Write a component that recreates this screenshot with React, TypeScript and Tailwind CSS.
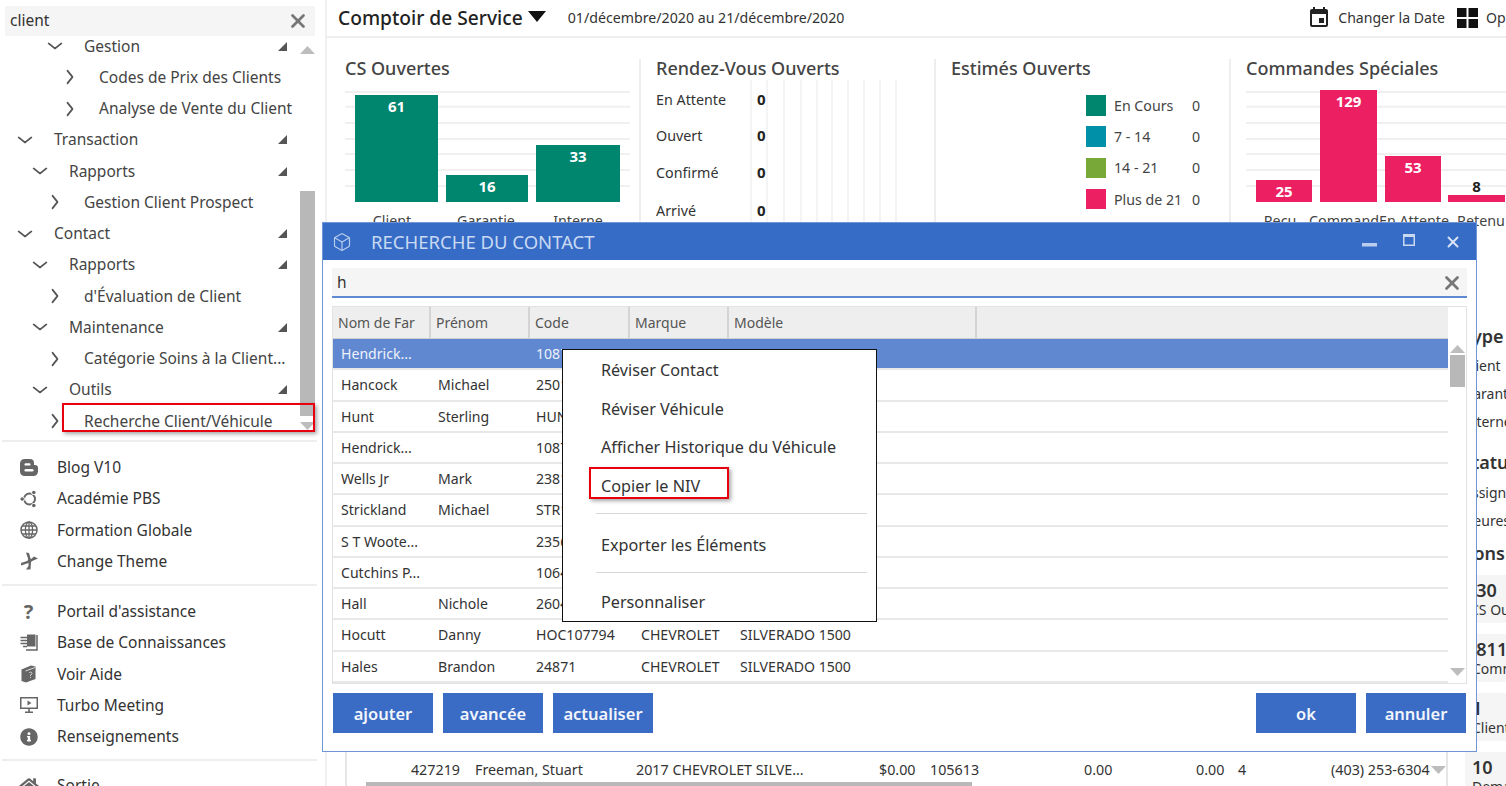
import React from "react";
import { ChevronDown, ChevronRight, Box, X } from "lucide-react";
import { FaInfoCircle, FaHome } from "react-icons/fa";
import { MdEvent } from "react-icons/md";

const tree: [number, string, boolean][] = [
  [2, "Gestion", true],
  [3, "Codes de Prix des Clients", false],
  [3, "Analyse de Vente du Client", false],
  [0, "Transaction", true],
  [1, "Rapports", true],
  [2, "Gestion Client Prospect", false],
  [0, "Contact", true],
  [1, "Rapports", true],
  [2, "d'Évaluation de Client", false],
  [1, "Maintenance", true],
  [2, "Catégorie Soins à la Client...", false],
  [1, "Outils", true],
  [2, "Recherche Client/Véhicule", false],
];

const rows: [string, string, string, string, string][] = [
  ["Hendrick...", "", "10879", "CHEVROLET", "CAMARO"],
  ["Hancock", "Michael", "25014", "CHEVROLET", "SILVERADO 1500"],
  ["Hunt", "Sterling", "HUN10433", "CHEVROLET", "SILVERADO 1500"],
  ["Hendrick...", "", "10879", "CHEVROLET", "SILVERADO 1500"],
  ["Wells Jr", "Mark", "23817", "CHEVROLET", "SILVERADO 1500"],
  ["Strickland", "Michael", "STR10622", "CHEVROLET", "SILVERADO 1500"],
  ["S T Woote...", "", "23565", "CHEVROLET", "SILVERADO 1500"],
  ["Cutchins P...", "", "10644", "CHEVROLET", "SILVERADO 1500"],
  ["Hall", "Nichole", "26044", "CHEVROLET", "SILVERADO 1500"],
  ["Hocutt", "Danny", "HOC107794", "CHEVROLET", "SILVERADO 1500"],
  ["Hales", "Brandon", "24871", "CHEVROLET", "SILVERADO 1500"],
];

const gridYs = [7, 21.7, 38, 54, 69, 85, 101];

function Corner() {
  return (
    <svg width="9" height="9" viewBox="0 0 9 9" className="shrink-0">
      <polygon points="0,9 9,9 9,0" fill="#555" />
    </svg>
  );
}

function UpArrow() {
  return (
    <svg width="15" height="8" viewBox="0 0 15 8" className="block">
      <polygon points="7.5,0 15,8 0,8" fill="#bdbdbd" />
    </svg>
  );
}
function DownArrow() {
  return (
    <svg width="15" height="8" viewBox="0 0 15 8" className="block">
      <polygon points="0,0 15,0 7.5,8" fill="#bdbdbd" />
    </svg>
  );
}

function SideItem({ icon, label }: { icon: React.ReactNode; label: string }) {
  return (
    <div className="flex h-[31.25px] shrink-0 items-center">
      <div className="flex w-[55px] shrink-0 justify-center pr-[2px] text-[#666]">{icon}</div>
      <span className="whitespace-nowrap text-[15.5px] text-[#333]">{label}</span>
    </div>
  );
}

const BlogIcon = (
  <svg width="18" height="17" viewBox="0 0 18 17">
    <path d="M4.5 0 H10 A4 4 0 0 1 14 4 V6 H15 A3 3 0 0 1 18 9 V12.5 A4.5 4.5 0 0 1 13.5 17 H4.5 A4.5 4.5 0 0 1 0 12.5 V4.5 A4.5 4.5 0 0 1 4.5 0Z" fill="#666" />
    <rect x="4.5" y="4.2" width="6" height="2.4" rx="1.2" fill="#fff" />
    <rect x="4.5" y="10" width="9" height="2.6" rx="1.3" fill="#fff" />
  </svg>
);
const UbuntuIcon = (
  <svg width="18" height="18" viewBox="0 0 18 18" fill="none">
    <circle cx="9.5" cy="9" r="5.5" stroke="#666" strokeWidth="2" />
    <circle cx="2.2" cy="9" r="2.6" fill="#fff" />
    <circle cx="13.8" cy="2.5" r="2.6" fill="#fff" />
    <circle cx="13.8" cy="15.5" r="2.6" fill="#fff" />
    <circle cx="2.2" cy="9" r="1.8" fill="#666" />
    <circle cx="13.8" cy="2.5" r="1.8" fill="#666" />
    <circle cx="13.8" cy="15.5" r="1.8" fill="#666" />
  </svg>
);
const GlobeIcon = (
  <svg width="18" height="18" viewBox="0 0 18 18" fill="none" stroke="#666" strokeWidth="1.3">
    <circle cx="9" cy="9" r="8" strokeWidth="1.5" />
    <ellipse cx="9" cy="9" rx="3.6" ry="8" />
    <path d="M9 1 V17 M1 9 H17 M2 5 H16 M2 13 H16" />
  </svg>
);
const ThemeIcon = (
  <svg width="18" height="18" viewBox="0 0 18 18" fill="#666">
    <circle cx="9.5" cy="9" r="2" />
    <path d="M8.5 8 L6 0.5 L9 1 L11 8Z" />
    <path d="M10.5 7.5 L14 4.5 L18 6.5 L11 9.5Z" />
    <path d="M8.5 8.5 L8.5 11 L1 13.5 L1 11Z" />
    <path d="M8.5 10 L11 10 L10.5 17.5 L6 17.5 L8.5 14Z" />
  </svg>
);
const KnowledgeIcon = (
  <svg width="18" height="17" viewBox="0 0 18 17" fill="none">
    <path d="M6 16 H17 V1" stroke="#666" strokeWidth="1.5" />
    <path d="M7 0.5 H15.5 V12.5 L7 12.5Z" fill="#666" />
    <path d="M0.5 3.5 H7 M0.5 6.5 H7 M0.5 9.5 H7 M3 12.5 H7" stroke="#666" strokeWidth="1.6" />
  </svg>
);
const HelpBookIcon = (
  <svg width="15" height="18" viewBox="0 0 15 18">
    <path d="M0.5 4.5 L10 0.5 L14.5 1.5 V14 L5 17.5 L0.5 16Z" fill="#666" />
    <path d="M4.5 6 L14 2.5" stroke="#ddd" strokeWidth="1" />
    <path d="M8.3 7.8 a1.4 1.4 0 1 1 1.2 2 v1.2 M9.5 12 v1" stroke="#ddd" strokeWidth="0.9" fill="none" />
  </svg>
);
const MeetingIcon = (
  <svg width="18" height="16" viewBox="0 0 18 16" fill="none">
    <rect x="0.75" y="0.75" width="16.5" height="10.5" stroke="#666" strokeWidth="1.5" />
    <polygon points="7.5,3.5 11.5,6 7.5,8.5" fill="#666" />
    <path d="M9 12 V15 M5 15.2 H13" stroke="#666" strokeWidth="1.6" />
  </svg>
);

function Sidebar() {
  return (
    <div className="flex h-full w-[325px] shrink-0 flex-col overflow-hidden bg-white">
      <div className="z-10 bg-white px-[5px] pb-[3px] pt-[6px]">
        <div className="flex h-[30px] w-[310px] items-center justify-between bg-[#f5f5f5] pl-[5px] pr-[6px]">
          <span className="text-[15.5px] text-[#333]">client</span>
          <X size={22} strokeWidth={3} className="text-[#777]" />
        </div>
      </div>
      <div className="flex h-[396px] shrink-0 overflow-hidden">
        <div className="-mt-[9px] w-[300px] shrink-0">
          {tree.map(([lvl, label, open], i) => (
            <div key={i} className="flex h-[31.25px] items-center pt-[1px] text-[#444]">
              <div style={{ width: 54 + lvl * 15 }} className="flex shrink-0 justify-end pr-[20px]">
                {open ? (
                  <ChevronDown size={20} strokeWidth={2} className="-mr-[1px] scale-x-125 text-[#555]" />
                ) : (
                  <ChevronRight size={20} strokeWidth={2} className="-mr-[1px] scale-y-125 text-[#555]" />
                )}
              </div>
              <span className="flex-1 whitespace-nowrap text-[15.5px]">{label}</span>
              {open && (
                <div className="pr-[13px]">
                  <Corner />
                </div>
              )}
            </div>
          ))}
        </div>
        <div className="flex w-[15px] shrink-0 flex-col items-center">
          <div className="mt-[7px]">
            <UpArrow />
          </div>
          <div className="mt-[137px] h-[225px] w-[15px] shrink-0 bg-[#b8b8b8]" />
          <div className="mt-[6px]">
            <DownArrow />
          </div>
        </div>
      </div>
      <div className="ml-[2px] mt-[5px] w-[315px] shrink-0 border-t-2 border-[#eeeeee] pb-[7px] pt-[10px]">
        <SideItem icon={BlogIcon} label="Blog V10" />
        <SideItem icon={UbuntuIcon} label="Académie PBS" />
        <SideItem icon={GlobeIcon} label="Formation Globale" />
        <SideItem icon={ThemeIcon} label="Change Theme" />
      </div>
      <div className="ml-[2px] w-[315px] shrink-0 border-t-2 border-[#eeeeee] pb-[7px] pt-[10px]">
        <SideItem icon={<span className="text-[20px] font-bold leading-none">?</span>} label="Portail d'assistance" />
        <SideItem icon={KnowledgeIcon} label="Base de Connaissances" />
        <SideItem icon={HelpBookIcon} label="Voir Aide" />
        <SideItem icon={MeetingIcon} label="Turbo Meeting" />
        <SideItem icon={<FaInfoCircle size={18} />} label="Renseignements" />
      </div>
      <div className="ml-[2px] w-[315px] shrink-0 border-t-2 border-[#eeeeee] pt-[9px]">
        <SideItem icon={<FaHome size={20} />} label="Sortie" />
      </div>
    </div>
  );
}

function BarChart({
  width,
  color,
  bars,
}: {
  width: number;
  color: string;
  bars: { x: number; w: number; top: number; value: string; label: string; lx: number; dark?: boolean }[];
}) {
  return (
    <svg width={width} height="150" className="block" fontFamily="'Noto Sans', sans-serif">
      {gridYs.map((y) => (
        <line key={y} x1="0" x2={width} y1={y} y2={y} stroke="#f0f0f0" strokeWidth="2" />
      ))}
      {bars.map((b) => (
        <g key={b.label}>
          <rect x={b.x} y={b.top - 85} width={b.w} height={202 - b.top} fill={color} />
          <text
            x={b.x + b.w / 2}
            y={b.dark ? b.top - 85 - 3 : b.top - 85 + 17}
            textAnchor="middle"
            fontSize="15"
            fontWeight="700"
            fill={b.dark ? "#222" : "#fff"}
          >
            {b.value}
          </text>
          <text x={b.lx} y={141} textAnchor="middle" fontSize="14.3" fill="#444">
            {b.label}
          </text>
        </g>
      ))}
    </svg>
  );
}

function Charts() {
  const rdv: [string, number][] = [
    ["En Attente", 20],
    ["Ouvert", 56],
    ["Confirmé", 93],
    ["Arrivé", 131],
  ];
  const legend: [string, string][] = [
    ["#00856f", "En Cours"],
    ["#0090a8", "7 - 14"],
    ["#78a938", "14 - 21"],
    ["#ec1f63", "Plus de 21"],
  ];
  const title = "text-[18px] leading-[18px] font-medium text-[#444] whitespace-nowrap";
  return (
    <div className="mt-[21px] flex h-[181px] shrink-0">
      <div className="w-[314px] shrink-0 border-r-2 border-[#eeeeee] pl-[18px]">
        <div className={title}>CS Ouvertes</div>
        <div className="mt-[8px]">
          <BarChart
            width={285}
            color="#00856f"
            bars={[
              { x: 10, w: 83, top: 95, value: "61", label: "Client", lx: 47 },
              { x: 101, w: 82, top: 175, value: "16", label: "Garantie", lx: 141 },
              { x: 191, w: 84, top: 145, value: "33", label: "Interne", lx: 233 },
            ]}
          />
        </div>
      </div>
      <div className="w-[295px] shrink-0 border-r-2 border-[#eeeeee] pl-[15px]">
        <div className={title}>Rendez-Vous Ouverts</div>
        <svg width="260" height="150" className="mt-[3px] block" fontFamily="'Noto Sans', sans-serif">
          {[95, 111, 128, 145, 161, 176, 192, 208, 224, 240].map((x) => (
            <line key={x} x1={x} x2={x} y1="0" y2="150" stroke="#f0f0f0" strokeWidth="1.5" />
          ))}
          {rdv.map(([l, y]) => (
            <g key={l}>
              <text x="0" y={y + 5} fontSize="14.3" fill="#333">
                {l}
              </text>
              <text x="101" y={y + 5} fontSize="15" fontWeight="700" fill="#222">
                0
              </text>
            </g>
          ))}
        </svg>
      </div>
      <div className="w-[295px] shrink-0 border-r-2 border-[#eeeeee] pl-[15px]">
        <div className={title}>Estimés Ouverts</div>
        <div className="ml-[135px] mt-[18px] flex flex-col gap-[10.8px]">
          {legend.map(([c, l]) => (
            <div key={l} className="flex h-[20.5px] items-center">
              <div className="h-[20.5px] w-[20px] shrink-0" style={{ backgroundColor: c }} />
              <span className="ml-[8px] w-[78px] shrink-0 whitespace-nowrap text-[14.2px] text-[#444]">{l}</span>
              <span className="text-[14.2px] text-[#444]">0</span>
            </div>
          ))}
        </div>
      </div>
      <div className="flex-1 overflow-hidden pl-[15px]">
        <div className={title}>Commandes Spéciales</div>
        <div className="mt-[8px]">
          <BarChart
            width={262}
            color="#ec1f63"
            bars={[
              { x: 10, w: 56, top: 180, value: "25", label: "Reçu", lx: 34 },
              { x: 74, w: 57, top: 90, value: "129", label: "Command", lx: 98 },
              { x: 139, w: 56, top: 156, value: "53", label: "En Attente", lx: 168 },
              { x: 202, w: 57, top: 195, value: "8", label: "Retenu", lx: 235, dark: true },
            ]}
          />
        </div>
      </div>
    </div>
  );
}

function RightColumn() {
  const tile = "bg-[#f5f5f5] pl-[7px] h-[48px] mb-[11px] flex flex-col justify-center shrink-0";
  const head = "-ml-[3px] shrink-0 text-[18px] font-semibold leading-[22px]";
  const sub = "-ml-[2px] flex shrink-0 flex-col text-[14px] leading-[28px]";
  const value = "text-[18px] font-semibold leading-[21px]";
  const label = "text-[14px] leading-[18px]";
  return (
    <div className="ml-[17px] flex h-[551px] w-[60px] shrink-0 flex-col whitespace-nowrap pt-[85px] text-[#333]">
      <div className={head}>Type</div>
      <div className={`${sub} mt-[5px]`}>
        <span>Client</span>
        <span>Garantie</span>
        <span>Interne</span>
      </div>
      <div className={`${head} mt-[15px]`}>Statut</div>
      <div className={`${sub} mt-[6px]`}>
        <span>Assigné</span>
        <span>Heures</span>
      </div>
      <div className={`${head} mb-[11px] mt-[7px]`}>Consignes</div>
      <div className={tile}>
        <span className={`${value} -ml-[6px]`}>130</span>
        <span className={`${label} -ml-[2px]`}>CS Ouvertes</span>
      </div>
      <div className={tile}>
        <span className={`${value} -ml-[6px]`}>$811.00</span>
        <span className={label}>Commandes</span>
      </div>
      <div className={tile}>
        <span className={value}>1</span>
        <span className={label}>Clients</span>
      </div>
      <div className={tile}>
        <span className={value}>10</span>
        <span className={label}>Demandes</span>
      </div>
    </div>
  );
}

function Main() {
  return (
    <div className="flex h-full flex-1 flex-col overflow-hidden border-l-2 border-[#f0f0f0]">
      <div className="flex h-[38px] shrink-0 items-center border-b-2 border-[#eeeeee] pl-[11px]">
        <span className="whitespace-nowrap text-[19.2px] font-medium text-[#222]">Comptoir de Service</span>
        <svg width="18" height="11" viewBox="0 0 18 11" className="-mt-[4px] ml-[5px] shrink-0">
          <polygon points="0,0 18,0 9,11" fill="#111" />
        </svg>
        <span className="ml-[22px] whitespace-nowrap text-[14.2px] text-[#333]">
          01/décembre/2020 au 21/décembre/2020
        </span>
        <div className="flex-1" />
        <MdEvent size={24} className="shrink-0 text-[#222]" />
        <span className="ml-[7px] whitespace-nowrap text-[14.1px] text-[#333]">Changer la Date</span>
        <svg width="21" height="20" viewBox="0 0 21 20" className="ml-[12px] shrink-0">
          <rect x="0" y="0" width="9.5" height="9" fill="#111" />
          <rect x="11.5" y="0" width="9.5" height="9" fill="#111" />
          <rect x="0" y="11" width="9.5" height="9" fill="#111" />
          <rect x="11.5" y="11" width="9.5" height="9" fill="#111" />
        </svg>
        <span className="ml-[8px] w-[20px] shrink-0 overflow-hidden whitespace-nowrap text-[14.1px] text-[#333]">
          Options
        </span>
      </div>
      <Charts />
      <div className="flex min-h-0 flex-1">
        <div className="ml-[18px] flex w-[1103px] shrink-0 flex-col justify-end border-l-2 border-r-2 border-[#e6e6e6]">
          <div className="flex h-[30px] shrink-0 items-center whitespace-nowrap pt-[6px] text-[14.3px] text-[#333]">
            <span className="w-[113px] shrink-0 text-right">427219</span>
            <span className="ml-[15px] w-[161px] shrink-0">Freeman, Stuart</span>
            <span className="w-[243px] shrink-0">2017 CHEVROLET SILVE...</span>
            <span className="w-[51px] shrink-0">$0.00</span>
            <span className="w-[154px] shrink-0">105613</span>
            <span className="w-[112px] shrink-0">0.00</span>
            <span className="w-[42px] shrink-0">0.00</span>
            <span className="w-[93px] shrink-0">4</span>
            <span className="w-[100px] shrink-0">(403) 253-6304</span>
            <DownArrow />
          </div>
          <div className="flex h-[4px] shrink-0 pl-[19px]">
            <div className="h-full w-[606px] bg-[#b8b8b8]" />
          </div>
        </div>
        <RightColumn />
      </div>
    </div>
  );
}

function Dialog() {
  const btn = "flex h-[40px] w-[100px] items-center justify-center bg-[#3a6cc6] pt-[2px] text-[16.5px] font-semibold text-[#f2f5fb]";
  const widths = ["w-[98px]", "w-[99px]", "w-[100px]", "w-[99px]", "w-[248px]"];
  const cell = ["w-[97px] pl-[8px]", "w-[99px] pl-[8px]", "w-[104px] pl-[7px]", "w-[99px] pl-[8px]", "pl-[8px]"];
  return (
    <div className="absolute left-[322px] top-[222px] flex h-[530px] w-[1155px] flex-col border border-[#7096d8] bg-white">
      <div className="flex h-[37px] shrink-0 items-center bg-[#366cc6] pl-[9px] pr-[14px]">
        <Box size={20} strokeWidth={1.4} className="text-[#b9cdee]" />
        <span className="ml-[19px] whitespace-nowrap text-[18.5px] text-[#c9d9f2]">RECHERCHE DU CONTACT</span>
        <div className="flex-1" />
        <svg width="15" height="4" viewBox="0 0 15 4" className="mt-[7px]">
          <rect width="15" height="3.5" fill="#b9cdee" />
        </svg>
        <svg width="12" height="12" viewBox="0 0 12 12" fill="none" className="-mt-[4px] ml-[26px]">
          <rect x="0.75" y="0.75" width="10.5" height="10.5" stroke="#c9d9f2" strokeWidth="1.5" />
          <rect x="0" y="0" width="12" height="3" fill="#c9d9f2" />
        </svg>
        <X size={18} strokeWidth={2.6} className="ml-[29px] text-[#d8e3f6]" />
      </div>
      <div className="mx-[9px] mt-[8px] flex h-[30px] shrink-0 items-center justify-between border-b-2 border-[#5f89d0] bg-[#f5f5f5] pl-[5px] pr-[4px] pt-[2px]">
        <span className="text-[15.5px] text-[#333]">h</span>
        <X size={22} strokeWidth={3} className="text-[#777]" />
      </div>
      <div className="mx-[9px] mt-[8px] flex h-[378px] shrink-0 border border-[#e2e2e2]">
        <div className="min-w-0 flex-1 overflow-hidden">
          <div className="flex h-[32px] border-b border-[#cfcfcf] bg-[#eeeeee]">
            {["Nom de Far", "Prénom", "Code", "Marque", "Modèle"].map((h, i) => (
              <div
                key={h}
                className={`${widths[i]} flex shrink-0 items-center overflow-hidden whitespace-nowrap border-r-2 border-[#d4d4d4] pl-[5px] text-[14px] text-[#555]`}
              >
                {h}
              </div>
            ))}
          </div>
          {rows.map((r, i) => (
            <div
              key={i}
              className={`flex h-[31.25px] items-center whitespace-nowrap border-b-2 text-[14.1px] ${
                i === 0 ? "border-[#e8e8e8] bg-[#6088d1] text-[#eef2fa]" : "border-[#e8e8e8] text-[#333]"
              }`}
            >
              {r.map((c, j) => (
                <span key={j} className={`${cell[j]} shrink-0`}>
                  {c}
                </span>
              ))}
            </div>
          ))}
        </div>
        <div className="flex w-[18px] shrink-0 flex-col items-center">
          <div className="mt-[38px]">
            <UpArrow />
          </div>
          <div className="mt-[2px] h-[32px] w-[15px] bg-[#b8b8b8]" />
          <div className="flex-1" />
          <div className="mb-[7px]">
            <DownArrow />
          </div>
        </div>
      </div>
      <div className="mx-[10px] mt-[9px] flex justify-between">
        <div className="flex gap-[10px]">
          <div className={btn}>ajouter</div>
          <div className={btn}>avancée</div>
          <div className={btn}>actualiser</div>
        </div>
        <div className="flex gap-[10px]">
          <div className={btn}>ok</div>
          <div className={btn}>annuler</div>
        </div>
      </div>
    </div>
  );
}

function ContextMenu() {
  const item = "flex h-[38.5px] items-center pl-[38px] text-[16.2px] text-[#333] whitespace-nowrap";
  return (
    <div className="absolute left-[562px] top-[349px] h-[273px] w-[315px] border border-[#111] bg-white pt-[1px]">
      <div className={item}>Réviser Contact</div>
      <div className={item}>Réviser Véhicule</div>
      <div className={item}>Afficher Historique du Véhicule</div>
      <div className={item}>Copier le NIV</div>
      <div className="ml-[33px] mr-[9px] mt-[8px] h-px bg-[#d8d8d8]" />
      <div className={`${item} mt-[12px]`}>Exporter les Éléments</div>
      <div className="ml-[33px] mr-[9px] mt-[7px] h-px bg-[#d8d8d8]" />
      <div className={`${item} mt-[10px]`}>Personnaliser</div>
    </div>
  );
}

export default function App() {
  return (
    <div className="relative flex h-[786px] w-[1506px] overflow-hidden bg-white font-['Noto_Sans',sans-serif]">
      <Sidebar />
      <Main />
      <Dialog />
      <ContextMenu />
      <div className="absolute left-[62px] top-[403px] h-[29px] w-[253px] border-2 border-[#e8000f] shadow-[2px_2px_4px_rgba(0,0,0,0.35)]" />
      <div className="absolute left-[589px] top-[467px] h-[32px] w-[140px] border-2 border-[#e8000f] shadow-[2px_2px_4px_rgba(0,0,0,0.35)]" />
    </div>
  );
}
